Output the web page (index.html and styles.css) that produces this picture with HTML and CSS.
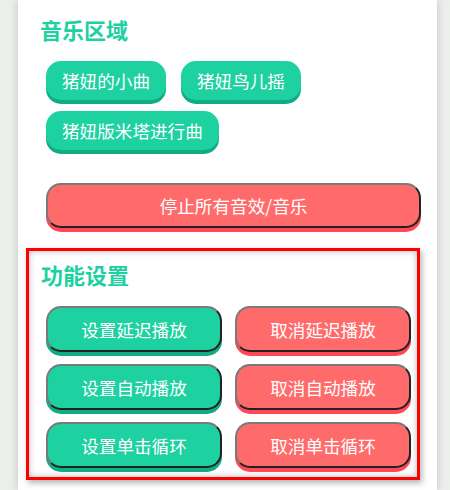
FILE: index.html
```html
<!DOCTYPE html>
<html lang="zh-CN">
<head>
    <meta charset="UTF-8">
    <meta name="viewport" content="width=device-width, initial-scale=1.0">
    <title>猪妞音乐</title>
    <link rel="stylesheet" href="styles.css">
</head>
<body>
    <div class="panel">
        <div class="music-area">
            <h2 class="section-title">音乐区域</h2>
            <div class="song-list">
                <button class="song-btn">猪妞的小曲</button>
                <button class="song-btn">猪妞鸟儿摇</button>
                <button class="song-btn">猪妞版米塔进行曲</button>
            </div>
            <button class="stop-btn">停止所有音效/音乐</button>
        </div>
        <div class="settings-area">
            <h2 class="section-title">功能设置</h2>
            <div class="settings-grid">
                <button class="set-btn on">设置延迟播放</button>
                <button class="set-btn off">取消延迟播放</button>
                <button class="set-btn on">设置自动播放</button>
                <button class="set-btn off">取消自动播放</button>
                <button class="set-btn on">设置单击循环</button>
                <button class="set-btn off">取消单击循环</button>
            </div>
        </div>
    </div>
</body>
</html>
```

FILE: styles.css
```css
body {
    margin: 0;
    background: #eceeeb;
    font-family: "Noto Sans CJK SC", "Noto Sans", sans-serif;
}

.panel {
    margin-left: 18px;
    width: 419px;
    height: 490px;
    background: #fff;
    box-shadow: 0 0 8px rgba(0, 0, 0, 0.18);
    padding-top: 15px;
    box-sizing: border-box;
}

.section-title {
    margin: 0;
    font-size: 22px;
    line-height: 28px;
    font-weight: bold;
    color: #1dd1a1;
}

.music-area {
    padding-left: 22px;
}

.song-list {
    display: flex;
    flex-wrap: wrap;
    gap: 11px 15px;
    margin: 18px 0 0 6px;
    width: 300px;
}

button {
    font-family: inherit;
    font-size: 17.6px;
    color: #fff;
    cursor: pointer;
}

.song-btn {
    height: 39px;
    padding: 0 16px;
    border: none;
    border-radius: 15px;
    background: #1dd1a1;
    box-shadow: 0 4px 0 #10ac84;
}

.stop-btn {
    display: block;
    margin: 33px 0 0 6px;
    width: 375px;
    height: 45px;
    border: 2px solid;
    border-color: #7a7a7a #222 #222 #7a7a7a;
    border-radius: 15px;
    background: #ff6b6b;
    box-shadow: 0 4px 0 #ff4757;
}

.settings-area {
    margin: 20px 0 0 8px;
    width: 394px;
    height: 232px;
    box-sizing: border-box;
    border: 3px solid #ff0000;
    padding: 9px 0 0 12px;
    box-shadow: inset 0 0 6px rgba(0, 0, 0, 0.3), 2px 3px 6px rgba(0, 0, 0, 0.3);
}

.settings-grid {
    display: grid;
    grid-template-columns: 176px 176px;
    gap: 12px 13px;
    margin: 18px 0 0 5px;
}

.set-btn {
    height: 46px;
    border: 2px solid;
    border-color: #7a7a7a #222 #222 #7a7a7a;
    border-radius: 15px;
}

.set-btn.on {
    background: #1dd1a1;
    box-shadow: 0 4px 0 #10ac84;
}

.set-btn.off {
    background: #ff6b6b;
    box-shadow: 0 4px 0 #ff4757;
}
```
